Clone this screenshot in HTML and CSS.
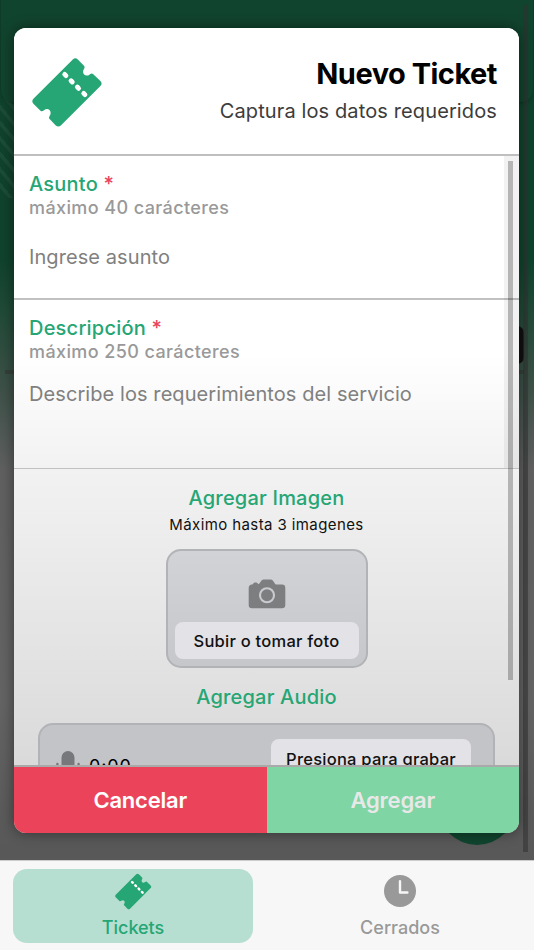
FILE: index.html
```html
<!DOCTYPE html>
<html lang="es">

<head>
    <meta charset="UTF-8">
    <meta name="viewport" content="width=device-width, initial-scale=1.0">
    <title>Nuevo Ticket</title>
    <link rel="stylesheet" href="styles.css">
</head>

<body>
    <svg class="sprite" aria-hidden="true">
        <symbol id="ticket" viewBox="0 2.5 71 71">
            <path fill="currentColor" d="M1.4 44.2 40.8 5Q43.3 2.6 45.8 5L52 11.3Q53.2 12.7 52 14.5C49 18.8 53.6 23.2 57.7 19.9Q59.8 18.4 61 19.5L68.4 26.5Q70.8 29 68.4 31.5L28.8 70.9Q26.3 73.2 23.8 70.9L17.6 64.6Q16.4 63.4 17.6 61.4C20.8 57 16 52.3 12 55.8Q9.8 57.4 8.5 56.2L1.4 49.2Q-.8 46.7 1.4 44.2Z" />
            <path fill="none" stroke="#fff" stroke-width="4.8" stroke-linecap="round" stroke-dasharray="1.8 7.15" d="M32.7 19.9 54.6 41.8" />
        </symbol>
    </svg>

    <main class="page">
        <div class="page-stripes"></div>
        <div class="page-header"></div>
        <div class="page-line"></div>
        <div class="page-chip"></div>
        <div class="page-fab"></div>
        <div class="page-scroll"></div>

        <section class="modal">
            <header class="modal-header">
                <svg class="modal-icon"><use href="#ticket" /></svg>
                <div class="modal-titles">
                    <h1>Nuevo Ticket</h1>
                    <p>Captura los datos requeridos</p>
                </div>
            </header>

            <div class="modal-body">
                <div class="field">
                    <label for="asunto">Asunto <b>*</b></label>
                    <small>máximo 40 carácteres</small>
                    <input type="text" id="asunto" placeholder="Ingrese asunto">
                </div>
                <div class="field field-text">
                    <label for="descripcion">Descripción <b>*</b></label>
                    <small>máximo 250 carácteres</small>
                    <textarea id="descripcion" placeholder="Describe los requerimientos del servicio"></textarea>
                </div>

                <div class="media">
                    <h2>Agregar Imagen</h2>
                    <p>Máximo hasta 3 imagenes</p>
                    <div class="photo">
                        <svg class="camera" viewBox="0 0 38 30">
                            <path fill="#7c7e80" d="M3.5 5.5 5 5.2Q5.3 3.5 6.7 3.5H8.3Q9.6 3.5 10.2 5.2 11.4 5 12.5 3L13.5 1.5Q14.4.5 16 .5H22.5Q24.2.5 25 1.7L27.2 5Q27.7 5.6 28.8 5.6H34Q37.3 5.6 37.3 9V26Q37.3 29.3 34 29.3H4Q.7 29.3.7 26V9Q.7 6 3.5 5.5Z" />
                            <circle cx="19" cy="16.2" r="7" fill="none" stroke="#cacbcf" stroke-width="2.1" />
                        </svg>
                        <button class="btn">Subir o tomar foto</button>
                    </div>
                    <h2>Agregar Audio</h2>
                    <div class="audio">
                        <svg class="mic" viewBox="0 0 26 36">
                            <rect x="6.5" y="1" width="13" height="23" rx="6.5" fill="#77787b" />
                            <path fill="none" stroke="#77787b" stroke-width="2.4" stroke-linecap="round" d="M2.4 14V18A10.6 10.6 0 0 0 23.6 18V14M13 29V35" />
                        </svg>
                        <span class="time">0:00</span>
                        <button class="btn btn-record">Presiona para grabar</button>
                    </div>
                </div>
                <div class="track"></div>
                <div class="thumb"></div>
            </div>

            <footer class="modal-actions">
                <button class="cancel">Cancelar</button>
                <button class="add">Agregar</button>
            </footer>
        </section>
    </main>

    <nav class="tabs">
        <a class="tab active">
            <svg class="tab-ticket"><use href="#ticket" /></svg>
            <span>Tickets</span>
        </a>
        <a class="tab">
            <svg class="tab-clock" viewBox="0 0 32 32">
                <circle cx="16" cy="16" r="16" fill="#999" />
                <path fill="none" stroke="#f7f7f7" stroke-width="2.4" stroke-linecap="round" stroke-linejoin="round" d="M16 6.3V17.5H23.4" />
            </svg>
            <span>Cerrados</span>
        </a>
    </nav>
</body>

</html>
```

FILE: styles.css
```css
* {
    margin: 0;
    padding: 0;
    box-sizing: border-box;
}

body {
    height: 100vh;
    display: flex;
    flex-direction: column;
    overflow: hidden;
    font-family: Inter, "Liberation Sans", sans-serif;
}

button,
input,
textarea {
    border: none;
    outline: none;
    background: none;
    font-family: inherit;
}

.sprite {
    position: absolute;
    width: 0;
    height: 0;
}

/* page behind the modal */
.page {
    position: relative;
    height: 860px;
    padding: 28px 15px 0 14px;
    overflow: hidden;
    background: linear-gradient(#10432d 0, #10432d 260px, #204a37 310px, #3e5149 390px, #606060 470px, #646464 700px, #585858 850px);
}

.page-stripes {
    position: absolute;
    top: 98px;
    left: 0;
    width: 14px;
    height: 100px;
    background: repeating-linear-gradient(50deg, transparent 0, transparent 6px, rgba(255, 255, 255, 0.05) 7px, rgba(255, 255, 255, 0.05) 10px);
}

.page-header {
    position: absolute;
    top: -20px;
    left: 1px;
    right: 1px;
    height: 122px;
    border-radius: 12px;
    background: #11442e;
    box-shadow: 0 1px 4px rgba(0, 0, 0, 0.25);
}

.page-line {
    position: absolute;
    top: 370px;
    left: 5px;
    right: 10px;
    height: 4px;
    background: #35403b;
}

.page-chip {
    position: absolute;
    top: 326px;
    right: 10px;
    width: 40px;
    height: 38px;
    border-radius: 7px;
    background: #111;
}

.page-fab {
    position: absolute;
    top: 767px;
    left: 438px;
    width: 78px;
    height: 78px;
    border-radius: 50%;
    background: #10452f;
}

.page-scroll {
    position: absolute;
    top: 5px;
    right: 6px;
    width: 5px;
    height: 847px;
    background: rgba(50, 50, 50, 0.55);
}

.modal {
    position: relative;
    height: 805px;
    display: flex;
    flex-direction: column;
    border-radius: 12px;
    overflow: hidden;
    background: linear-gradient(#fff 0, #fff 325px, #f2f2f2 440px, #dadada 735px);
    box-shadow: 0 0 14px rgba(0, 0, 0, 0.45);
}

.modal-header {
    height: 128px;
    display: flex;
    justify-content: space-between;
    padding: 29px 22px 0 18px;
    border-bottom: 2px solid #bfbfbf;
    background: #fff;
}

.modal-icon {
    width: 71px;
    height: 71px;
    color: #25a674;
}

.modal-titles {
    text-align: right;
}

.modal-titles h1 {
    font-size: 29px;
    line-height: 34px;
    font-weight: 700;
    letter-spacing: -0.5px;
}

.modal-titles p {
    margin-top: 7px;
    font-size: 20px;
    line-height: 26px;
    letter-spacing: 0.12px;
    color: #3c3c3c;
}

.modal-body {
    position: relative;
    height: 609px;
    overflow: hidden;
}

.field {
    height: 144px;
    display: flex;
    flex-direction: column;
    padding: 16px 15px 0;
    border-bottom: 2px solid #c1c1c1;
}

.field label {
    font-size: 20px;
    line-height: 25px;
    font-weight: 500;
    letter-spacing: 0.22px;
    color: #25a674;
}

.field label b {
    font-weight: 500;
    color: #eb445a;
}

.field small {
    font-size: 18px;
    line-height: 21px;
    font-weight: 500;
    letter-spacing: 0.4px;
    color: #999;
}

.field input,
.field textarea {
    margin-top: 26px;
    font-size: 20px;
    line-height: 26px;
    letter-spacing: 0.08px;
    resize: none;
}

.field ::placeholder {
    color: #808080;
    opacity: 1;
}

.field-text {
    height: 169px;
    border-bottom-width: 1px;
}

.field textarea {
    margin-top: 19px;
    height: 60px;
}

.media {
    display: flex;
    flex-direction: column;
    align-items: center;
    padding: 16px 24px 0;
}

.media h2 {
    font-size: 20px;
    line-height: 26px;
    font-weight: 500;
    letter-spacing: 0.2px;
    color: #25a674;
}

.media p {
    margin-top: 4px;
    font-size: 15px;
    line-height: 20px;
    letter-spacing: 0.4px;
    color: #111;
}

.photo {
    width: 202px;
    height: 119px;
    margin: 14px 0 16px;
    display: flex;
    flex-direction: column;
    align-items: center;
    justify-content: space-between;
    padding: 28px 7px 7px;
    border: 2px solid #b2b3b7;
    border-radius: 15px;
    background: linear-gradient(#d2d3d7, #c6c7cb);
}

.camera {
    width: 38px;
    height: 30px;
}

.btn {
    width: 184px;
    height: 37px;
    border-radius: 8px;
    background: #e2e2e7;
    font-size: 16.5px;
    font-weight: 500;
    letter-spacing: 0.25px;
    color: #111;
}

.audio {
    width: 457px;
    height: 75px;
    display: flex;
    align-items: flex-start;
    margin-top: 13px;
    padding: 14px 22px 0 15px;
    border: 2px solid #b2b3b7;
    border-radius: 15px;
    background: #c3c4c8;
}

.mic {
    width: 26px;
    height: 36px;
    margin-top: 11px;
}

.time {
    margin: 15px 0 0 8px;
    font-size: 18px;
    line-height: 26px;
    letter-spacing: 0.9px;
}

.btn-record {
    width: 200px;
    height: 39px;
    margin-left: auto;
}

.track {
    position: absolute;
    top: 0;
    right: 0;
    width: 15px;
    height: 312px;
    background: rgba(0, 0, 0, 0.05);
}

.thumb {
    position: absolute;
    top: 5px;
    right: 6px;
    width: 5px;
    height: 519px;
    background: rgba(0, 0, 0, 0.25);
}

.modal-actions {
    flex: 1;
    display: flex;
    border-top: 2px solid #a9a9a9;
}

.modal-actions button {
    flex: 1;
    font-size: 22px;
    font-weight: 600;
    letter-spacing: -0.2px;
}

.cancel {
    background: #eb445a;
    color: #fff;
}

.modal-actions .add {
    background: #7fd5a3;
    color: #e8e8e8;
}

.tabs {
    flex: 1;
    display: flex;
    padding: 8px 14px 7px 13px;
    gap: 27px;
    border-top: 1px solid #ccc;
    background: #f7f7f7;
}

.tab {
    flex: 1;
    display: flex;
    flex-direction: column;
    align-items: center;
    justify-content: space-between;
    padding: 4px 0;
    border-radius: 14px;
    font-size: 18px;
    line-height: 22px;
    font-weight: 500;
    color: #999;
}

.tab.active {
    background: #b7dfd1;
    color: #25a674;
}

.tab-ticket {
    width: 37px;
    height: 37px;
}

.tab-clock {
    width: 32px;
    height: 32px;
    margin-top: 2px;
}
```
